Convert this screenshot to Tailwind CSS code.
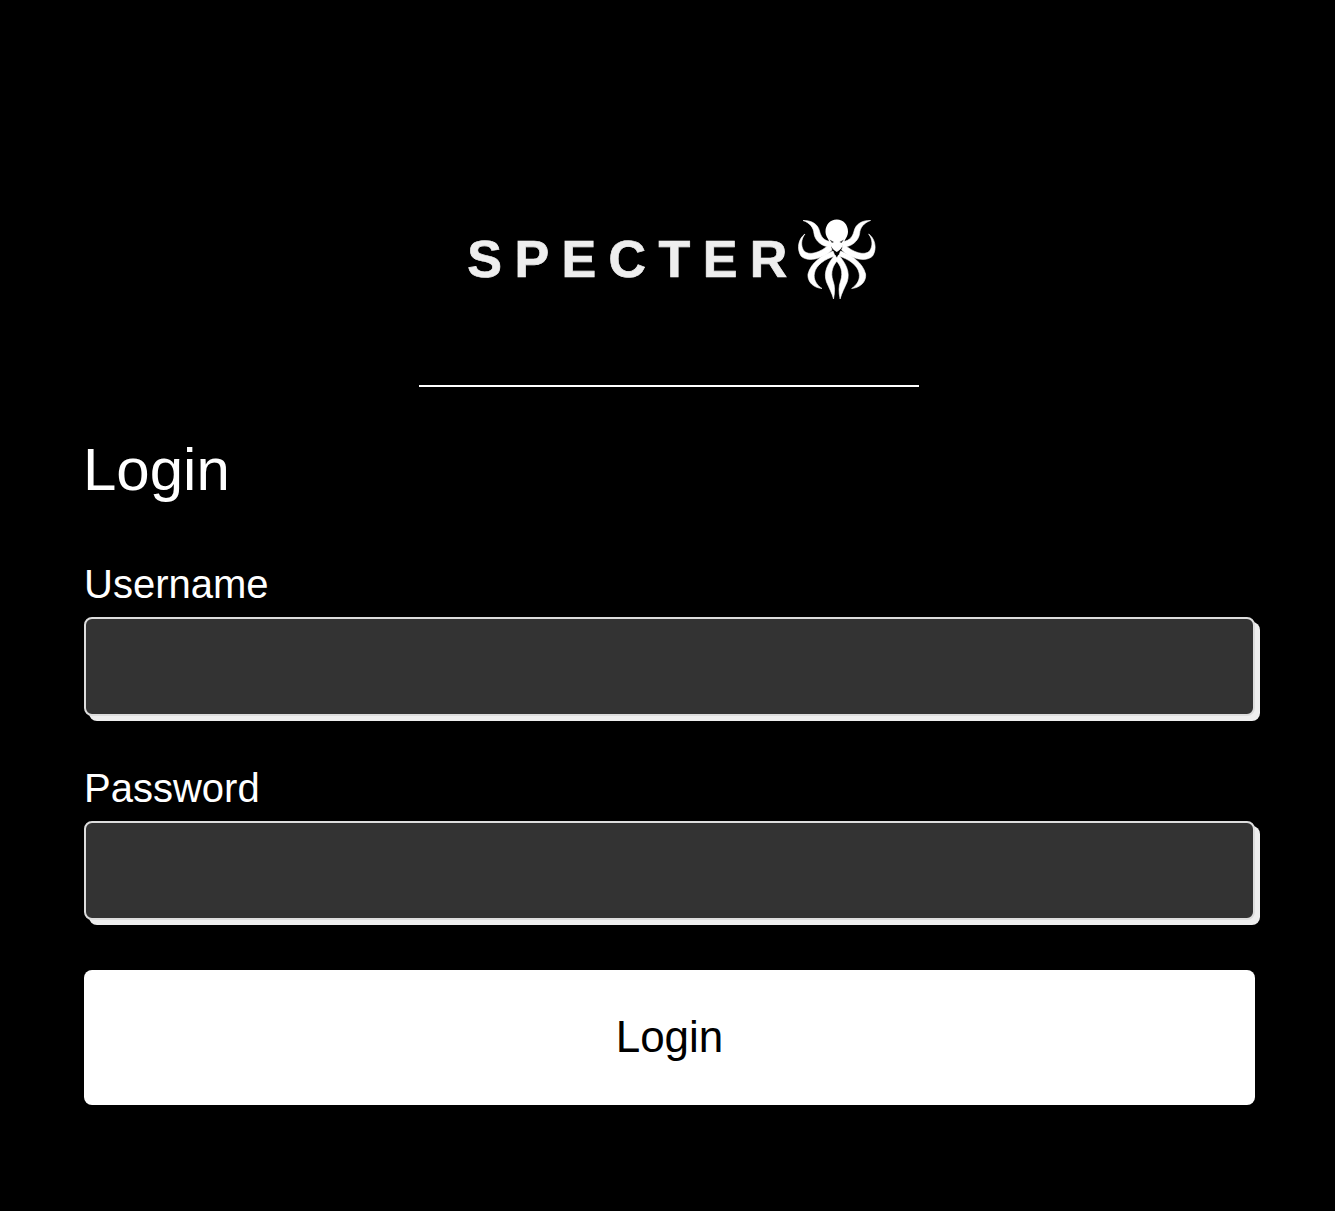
<!DOCTYPE html>
<html lang="en">
<head>
    <meta charset="UTF-8">
    <meta name="viewport" content="width=device-width, initial-scale=1.0">
    <title>Login</title>
    <script src="https://cdn.jsdelivr.net/npm/@tailwindcss/browser@4"></script>
</head>
<body class="min-h-screen bg-black text-white font-['Liberation_Sans',Arial,sans-serif]">
    <div class="pl-[84px] pr-[80px] pt-[210px]">
        <!-- Logo -->
        <div class="flex justify-center items-center h-[95px] pl-[13px]">
            <span class="text-[52px] leading-none font-bold tracking-[12.4px] text-[#eeeeee] -mr-[10px] pt-[2px] blur-[0.5px] [-webkit-text-stroke:0.7px_#eeeeee]">SPECTER</span>
            <svg class="w-[95px] h-[95px] shrink-0 blur-[0.4px]" viewBox="0 0 95 95" fill="#ffffff">
                <g id="arms" stroke="#ffffff" stroke-width="0.6" stroke-linejoin="round">
                    <path d="M13 10.5 C21 10 28 14 29.5 21 C31 27 34 30.5 40 31.5 L41 37 C32 37 25 31 24 23.5 C23.5 17.5 20 13 13 10.5 Z"/>
                    <path d="M15 24 C11 29 10.5 36 14 41 C19 46 30 43 40 34 L42 40 C31 50 17 52 11 46 C6 38 9 28 15 24 Z"/>
                    <path d="M43 41 C33 45 21 52 18 64 C17 72 24 78 32 78.5 C27 75 23 70 24.5 63 C26 55 35 49 45 46 Z"/>
                    <path d="M45 45 C38 53 33 62 36.5 72 C39 78 42 83 43.5 89 C45 82 45 76 43 71 C40 62 43 55 48 50 Z"/>
                </g>
                <use href="#arms" transform="translate(93.6 0) scale(-1 1)"/>
                <path d="M46.8 9.5 C53.5 9.5 58 15 58 21.5 C58 26 55.5 28.5 54.5 31 C53.5 35 51 40 46.8 42 C42.6 40 40 35 39 31 C38 28.5 35.5 26 35.5 21.5 C35.5 15 40 9.5 46.8 9.5 Z"/>
                <path d="M39.5 29.5 L44 32 L42 33 Z M54 29.5 L49.5 32 L51.5 33 Z" fill="#444444"/>
            </svg>
        </div>

        <!-- Divider -->
        <div class="w-[500px] h-[2px] bg-white ml-[335px] mt-[80px]"></div>

        <form onsubmit="return false">
            <h1 class="text-[60px] leading-[67px] font-normal mt-[49px] mb-[59px] -ml-[1px]">Login</h1>

            <label for="username" class="block text-[40px] leading-[45px] mb-[10px]">Username</label>
            <input id="username" type="text" class="block w-full h-[99px] bg-[#333333] border-2 border-[#dddddd] rounded-lg shadow-[5px_5px_0_#eeeeee] mb-[50px]">

            <label for="password" class="block text-[40px] leading-[45px] mb-[10px]">Password</label>
            <input id="password" type="password" class="block w-full h-[99px] bg-[#333333] border-2 border-[#dddddd] rounded-lg shadow-[5px_5px_0_#eeeeee] mb-[50px]">

            <button type="submit" class="block w-full h-[135px] bg-white text-black text-[44px] rounded-lg leading-none pb-[2px]">Login</button>
        </form>
    </div>
</body>
</html>
